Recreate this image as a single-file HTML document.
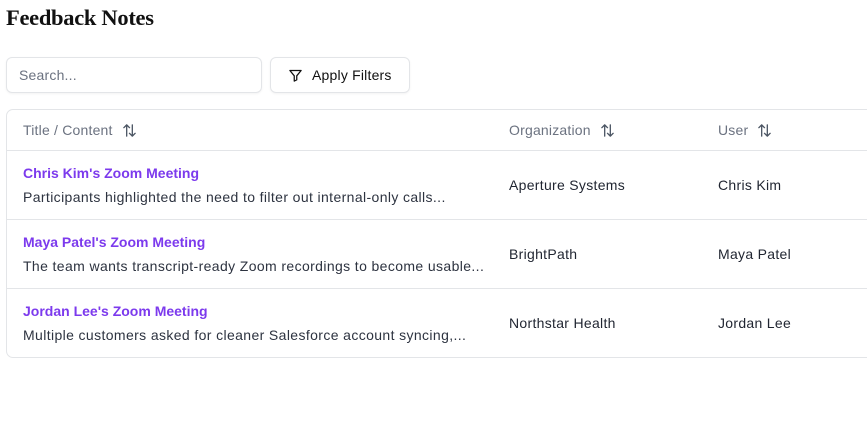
<!DOCTYPE html>
<html><head><style>
*{box-sizing:border-box;margin:0;padding:0}
body{width:867px;height:436px;background:#fff;font-family:"Liberation Sans",sans-serif;position:relative;overflow:hidden;color:#1f2430}
h1{position:absolute;left:6px;top:5px;font-family:"Liberation Serif",serif;font-weight:bold;font-size:22.5px;color:#111;letter-spacing:-0.3px}
.search{position:absolute;left:6px;top:57px;width:256px;height:36px;border:1px solid #e3e5e8;border-radius:6px;box-shadow:0 1px 2px rgba(0,0,0,.05);font-size:14px;color:#6b7280;padding:9px 12px;letter-spacing:0.2px}
.btn{position:absolute;left:270px;top:57px;width:140px;height:36px;border:1px solid #e3e5e8;border-radius:6px;box-shadow:0 1px 2px rgba(0,0,0,.05);font-size:14px;color:#111;padding:9px 0 0 41px;letter-spacing:0.2px}
.btn svg{position:absolute;left:17px;top:10px}
.table{position:absolute;left:6px;top:109px;width:880px;height:249px;border:1px solid #e3e5e8;border-radius:7px}
.row{position:absolute;left:0;width:100%;border-top:1px solid #e3e5e8}
.h{position:absolute;top:12px;font-size:14px;color:#6b7280;letter-spacing:0.2px;display:flex;align-items:center}
.h svg{margin-left:9px}
.t{position:absolute;left:16px;font-size:14px;color:#7c3aed;font-weight:bold}
.d{position:absolute;left:16px;font-size:14px;color:#2d3340;letter-spacing:0.38px}
.c{position:absolute;font-size:14px;color:#1f2430;letter-spacing:0.3px}
</style></head><body>
<h1>Feedback Notes</h1>
<div class="search">Search...</div>
<div class="btn"><svg width="15" height="15" viewBox="0 0 24 24" fill="none" stroke="#111" stroke-width="2" stroke-linejoin="round"><path d="M3 4h18l-7 8.5V19l-4 2v-8.5z"/></svg>Apply Filters</div>
<div class="table">
<div class="h" style="left:16px">Title / Content<svg width="15" height="15" viewBox="0 0 16 16" fill="none" stroke="#4b5563" stroke-width="1.4" stroke-linecap="round" stroke-linejoin="round"><path d="M5 14V2M2 5l3-3 3 3M11 2v12M8 11l3 3 3-3"/></svg></div>
<div class="h" style="left:502px">Organization<svg width="15" height="15" viewBox="0 0 16 16" fill="none" stroke="#4b5563" stroke-width="1.4" stroke-linecap="round" stroke-linejoin="round"><path d="M5 14V2M2 5l3-3 3 3M11 2v12M8 11l3 3 3-3"/></svg></div>
<div class="h" style="left:711px">User<svg width="15" height="15" viewBox="0 0 16 16" fill="none" stroke="#4b5563" stroke-width="1.4" stroke-linecap="round" stroke-linejoin="round"><path d="M5 14V2M2 5l3-3 3 3M11 2v12M8 11l3 3 3-3"/></svg></div>
<div class="row" style="top:40px;height:69px">
<div class="t" style="top:14px">Chris Kim's Zoom Meeting</div>
<div class="d" style="top:38px">Participants highlighted the need to filter out internal-only calls...</div>
<div class="c" style="left:502px;top:26px">Aperture Systems</div>
<div class="c" style="left:711px;top:26px">Chris Kim</div></div>
<div class="row" style="top:109px;height:69px">
<div class="t" style="top:14px">Maya Patel's Zoom Meeting</div>
<div class="d" style="top:38px">The team wants transcript-ready Zoom recordings to become usable...</div>
<div class="c" style="left:502px;top:26px">BrightPath</div>
<div class="c" style="left:711px;top:26px">Maya Patel</div></div>
<div class="row" style="top:178px;height:69px">
<div class="t" style="top:14px">Jordan Lee's Zoom Meeting</div>
<div class="d" style="top:38px">Multiple customers asked for cleaner Salesforce account syncing,...</div>
<div class="c" style="left:502px;top:26px">Northstar Health</div>
<div class="c" style="left:711px;top:26px">Jordan Lee</div></div>
</div>
</body></html>
